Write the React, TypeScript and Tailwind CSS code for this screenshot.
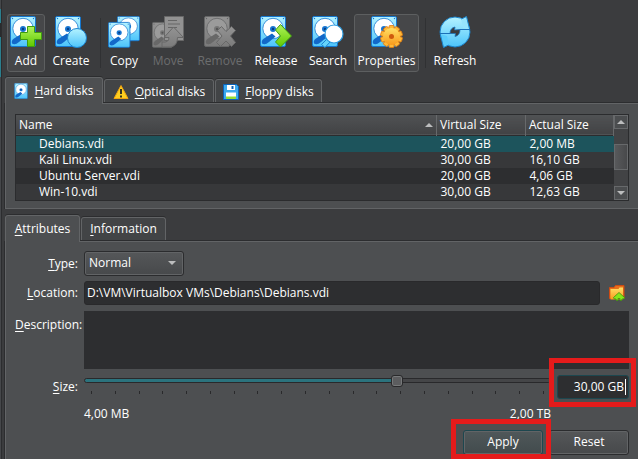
import { useState, type CSSProperties, type ReactNode } from "react";
import clsx from "clsx";

function Defs() {
  return (
    <svg width="0" height="0" className="absolute" aria-hidden="true">
      <defs>
        <linearGradient id="sky" x1="0" y1="0" x2="0" y2="1">
          <stop offset="0" stopColor="#b4f2ff" />
          <stop offset="1" stopColor="#4cc4fb" />
        </linearGradient>
        <linearGradient id="lime" x1="0" y1="0" x2="0" y2="1">
          <stop offset="0" stopColor="#b0f45a" />
          <stop offset="1" stopColor="#5fc800" />
        </linearGradient>
        <linearGradient id="amber" x1="0" y1="0" x2="0" y2="1">
          <stop offset="0" stopColor="#ffe066" />
          <stop offset="1" stopColor="#f99a1c" />
        </linearGradient>
        <linearGradient id="ash" x1="0" y1="0" x2="0" y2="1">
          <stop offset="0" stopColor="#939393" />
          <stop offset="1" stopColor="#7b7b7b" />
        </linearGradient>
      </defs>
    </svg>
  );
}

function Disk({ gray = false }: { gray?: boolean }) {
  const line = gray ? "#666768" : "#1577cf";
  return (
    <g>
      <rect x="0.5" y="0.5" width="25" height="30" rx="1.5" fill={gray ? "url(#ash)" : "url(#sky)"} stroke={line} />
      <circle cx="13" cy="12.5" r="10.2" fill={gray ? "#9b9b9b" : "#fff"} stroke={line} strokeWidth="0.8" />
      <path d="M12 17.500 15.500 20.500 9 26q-4 3.500-7 1.500-1-3 2-5Z" fill={gray ? "#686868" : "#1268c9"} />
      <circle cx="13" cy="13" r="3" fill={gray ? "#777" : "#1976d2"} />
      <circle cx="13" cy="13" r="1.2" fill={gray ? "#555" : "#083d86"} />
      <g fill={line}>
        <circle cx="2.5" cy="2.5" r="0.7" />
        <circle cx="23.5" cy="2.5" r="0.7" />
      </g>
    </g>
  );
}

function BigIcon({ children }: { children: ReactNode }) {
  return (
    <svg width="32" height="32" viewBox="0 0 32 32" className="shrink-0" aria-hidden="true">
      {children}
    </svg>
  );
}

const icons: Record<string, ReactNode> = {
  Add: (
    <>
      <Disk />
      <path d="M17.5 10.5h7v6h7v7h-7v7h-7v-7h-7v-7h7Z" fill="url(#lime)" stroke="#3f9c10" />
    </>
  ),
  Create: (
    <>
      <Disk />
      <circle cx="22" cy="22" r="9.5" fill="url(#sky)" stroke="#1c85d0" />
    </>
  ),
  Copy: (
    <>
      <g transform="translate(9 0) scale(.88 .81)">
        <Disk />
      </g>
      <g transform="translate(0 6) scale(.86 .83)">
        <Disk />
      </g>
    </>
  ),
  Move: (
    <>
      <g transform="translate(0 6) scale(.8 .83)">
        <Disk gray />
      </g>
      <path d="M12.5.5h19v24h-19Z" fill="#929292" stroke="#686868" />
      <path d="M16 4.5h9M16 8h12M16 11.500h9" stroke="#666" />
      <path d="m21.500 11 10 10.500h-6q0 8-6.500 9.500H10v-5q7 1 7-4.500h-5Z" fill="url(#ash)" stroke="#686868" />
    </>
  ),
  Remove: (
    <>
      <Disk gray />
      <path d="m13.500 14.500 4-4 4.500 5 5.500-5 4 4-5 5.500 5 6.500-4 4-5.500-5.500-5.500 5.500-4-4 5.500-6.500Z" fill="url(#ash)" stroke="#686868" />
    </>
  ),
  Release: (
    <>
      <Disk />
      <path d="m20.500 8.500 11 11.500-11 11-5-5 5-6-5-6Z" fill="url(#lime)" stroke="#3f9c10" />
    </>
  ),
  Search: (
    <>
      <Disk />
      <path d="m15 23 3 3-5 5.500-3.500-3Z" fill="#65d3fb" stroke="#1c85d0" />
      <circle cx="22" cy="18" r="9" fill="#fff" stroke="#2d9be0" strokeWidth="1.200" />
    </>
  ),
  Properties: (
    <>
      <Disk />
      <g transform="translate(20.500 20.500)">
        {[0, 36, 72, 108, 144].map((a) => (
          <rect key={a} x="-2.500" y="-11" width="5" height="22" rx="1" fill="#ffb938" stroke="#e07a10" strokeWidth="0.800" transform={`rotate(${a})`} />
        ))}
        <circle r="8.500" fill="url(#amber)" />
        <circle r="2.500" fill="#ce5a0e" />
      </g>
    </>
  ),
  Refresh: (
    <>
      <circle cx="16" cy="16" r="15" fill="url(#sky)" stroke="#1b83cb" />
      <path d="M22 3 27.500.5 30.800 14 24 12Z" fill="#97e4fd" />
      <path d="M22.500 3 27.500.5 30.800 14" fill="none" stroke="#1b83cb" />
      <path d="M10 29 4.500 31.500 1.200 18 8 20Z" fill="#5accfb" />
      <path d="M9.500 29 4.500 31.500 1.200 18" fill="none" stroke="#1b83cb" />
      <path d="M1 17.500h10M21 13.500h10" stroke="#1b70b8" />
      <path d="M11 17.500q0-5.500 5-6.500l-.5 3 5.500-.5q0 6-5 7l.5-3Z" fill="#3b3c3e" stroke="#1b70b8" strokeWidth=".8" />
    </>
  ),
};

function Tool({ name, width, state }: { name: string; width: string; state?: "boxed" | "disabled" }) {
  return (
    <button
      type="button"
      disabled={state === "disabled"}
      className={clsx(
        "flex h-[58px] shrink-0 flex-col items-center rounded-[3px] border pt-px",
        width,
        state === "boxed" ? "border-[#5d5f60] bg-[#464749]" : "border-transparent",
        state === "disabled" ? "text-[#6c6d6e]" : "text-white",
      )}
    >
      <BigIcon>{icons[name]}</BigIcon>
      <span className="mt-[5px] leading-4">{name}</span>
    </button>
  );
}

function Separator({ className }: { className: string }) {
  return <div className={clsx("my-1 w-px shrink-0 bg-[#303133]", className)} />;
}

function Mnemonic({ children }: { children: string }) {
  return <span className="underline decoration-white decoration-1 underline-offset-2">{children}</span>;
}

function Tab({ letter, rest, active, icon, width }: { letter: string; rest: string; active?: boolean; icon?: ReactNode; width: string }) {
  return (
    <button
      type="button"
      role="tab"
      aria-selected={!!active}
      className={clsx(
        "flex shrink-0 items-center justify-center gap-1.5 rounded-t-[3px] border border-b-0 border-[#626466] text-white shadow-[0_-1px_0_#2c2d2f]",
        width,
        active ? "z-10 -mb-px h-[27px] bg-[#4d4f51]" : "h-6 bg-[#424446]",
      )}
    >
      {icon}
      <span>
        <Mnemonic>{letter}</Mnemonic>
        {rest}
      </span>
    </button>
  );
}

const disks = [
  ["Debians.vdi", "20,00 GB", "2,00 MB"],
  ["Kali Linux.vdi", "30,00 GB", "16,10 GB"],
  ["Ubuntu Server.vdi", "20,00 GB", "4,06 GB"],
  ["Win-10.vdi", "30,00 GB", "12,63 GB"],
];

function Arrow({ down }: { down?: boolean }) {
  return (
    <svg width="8" height="4" viewBox="0 0 8 4" aria-hidden="true">
      <path d={down ? "M0 0h8L4 4Z" : "M0 4h8L4 0Z"} fill="#bcbdbe" />
    </svg>
  );
}

function DiskTable() {
  const head = "border-r border-[#67696b] px-[3px] py-0 text-left font-normal leading-4";
  return (
    <div className="flex border border-[#2b2c2e] bg-[#2d2e30]">
      <table className="flex-1 table-fixed border-collapse">
        <colgroup>
          <col />
          <col className="w-[89px]" />
          <col className="w-[88px]" />
        </colgroup>
        <thead>
          <tr className="h-5 border-b border-[#2b2c2e] bg-linear-to-b from-[#505254] to-[#424345]">
            <th className={head}>
              <span className="flex items-center justify-between">
                Name
                <Arrow />
              </span>
            </th>
            <th className={head}>Virtual Size</th>
            <th className={head}>Actual Size</th>
          </tr>
        </thead>
        <tbody>
          {disks.map(([name, virtual, actual], i) => (
            <tr key={name} className={clsx("h-4 leading-4", i === 0 ? "bg-[#1d545c]" : i % 2 ? "bg-[#37383a]" : "bg-[#2d2e30]")}>
              <td className="py-0 pl-[23px]">{name}</td>
              <td className="px-1 py-0">{virtual}</td>
              <td className="px-1 py-0">{actual}</td>
            </tr>
          ))}
        </tbody>
      </table>
      <div className="flex w-3.5 flex-col bg-[#424345]">
        <button type="button" aria-label="Scroll up" className="flex h-3.5 items-center justify-center border border-[#67696b] bg-[#4b4d4f]">
          <Arrow />
        </button>
        <div className="flex flex-1 flex-col justify-center">
          <div className="h-[26px] border border-[#67696b] bg-linear-to-r from-[#58595b] to-[#48494b]" />
        </div>
        <button type="button" aria-label="Scroll down" className="flex h-3.5 items-center justify-center border border-[#67696b] bg-[#4b4d4f]">
          <Arrow down />
        </button>
      </div>
    </div>
  );
}

const label = "text-right";
const field = "h-6 rounded-[3px] border bg-[#2d2e30] text-white outline-none";
const action = "h-[25px] w-20 rounded-[3px] border shadow-[inset_0_0_0_1px_#626466] text-white";

function Callout({ className }: { className: string }) {
  return <div className={clsx("pointer-events-none absolute z-10 border-[#e51b1b]", className)} />;
}

function Attributes() {
  const [size, setSize] = useState(676);
  const fill = { "--fill": `linear-gradient(90deg, #2b737d ${size / 10}%, #454648 ${size / 10}%)` } as CSSProperties;
  return (
    <form className="grid grid-cols-[63px_minmax(0,1fr)] gap-x-1.5 px-[9px] pt-[9px]" onSubmit={(e) => e.preventDefault()}>
      <label htmlFor="type" className={clsx(label, "leading-[25px]")}>
        <Mnemonic>T</Mnemonic>ype:
      </label>
      <div className="relative w-[100px]">
        <select id="type" className="block h-[25px] w-full appearance-none rounded-[3px] border border-[#2b2c2e] bg-linear-to-b from-[#555759] to-[#47494b] px-1 text-white shadow-[inset_0_0_0_1px_#626466]">
          <option>Normal</option>
        </select>
        <span className="pointer-events-none absolute top-[10px] right-2 flex">
          <Arrow down />
        </span>
      </div>

      <label htmlFor="location" className={clsx(label, "mt-[5px] leading-6")}>
        <Mnemonic>L</Mnemonic>ocation:
      </label>
      <div className="mt-[5px] flex items-center">
        <input id="location" readOnly value="D:\VM\Virtualbox VMs\Debians\Debians.vdi" className={clsx(field, "min-w-0 flex-1 border-[#29292b] px-0.5")} />
        <button type="button" aria-label="Choose location" className="mr-1 ml-[9px]">
          <svg width="16" height="16" viewBox="0 0 16 16" aria-hidden="true">
            <path d="M.5 2.500H5L6.500.5h8.500v13H.5Z" fill="#e8701b" stroke="#cf4c13" />
            <path d="M1.500 4h8l1-1.500h3.500V14.500h-12.500Z" fill="url(#amber)" />
            <path d="m10 7.500 5.500 5q0 2-2.500 1.500l-.5 1.500h-1.500v-2h-2v2H7.500L7 14q-2.500.5-2.500-1.500Z" fill="#86e619" stroke="#3f8e10" strokeWidth=".8" />
          </svg>
        </button>
      </div>

      <label htmlFor="description" className={clsx(label, "mt-1.5 leading-7")}>
        <Mnemonic>D</Mnemonic>escription:
      </label>
      <textarea id="description" className="mt-1.5 block h-[58px] w-full resize-none bg-[#2d2e30] outline-none" />

      <label htmlFor="size" className={clsx(label, "mt-1.5 leading-6")}>
        <Mnemonic>S</Mnemonic>ize:
      </label>
      <div className="mt-1.5 flex gap-1.5">
        <div className="min-w-0 flex-1">
          <input
            id="size"
            type="range"
            max={1000}
            value={size}
            onChange={(e) => setSize(Number(e.target.value))}
            className="block h-3 w-full appearance-none bg-transparent [&::-webkit-slider-runnable-track]:h-[5px] [&::-webkit-slider-runnable-track]:rounded-sm [&::-webkit-slider-runnable-track]:border [&::-webkit-slider-runnable-track]:border-[#29292b] [&::-webkit-slider-runnable-track]:bg-[image:var(--fill)] [&::-webkit-slider-thumb]:-mt-1 [&::-webkit-slider-thumb]:size-3 [&::-webkit-slider-thumb]:appearance-none [&::-webkit-slider-thumb]:rounded-[3px] [&::-webkit-slider-thumb]:border [&::-webkit-slider-thumb]:border-[#29292b] [&::-webkit-slider-thumb]:bg-[#5c5d5f] [&::-webkit-slider-thumb]:shadow-[inset_0_0_0_1px_#77797a]"
            style={fill}
          />
          <div className="mt-1 flex justify-between px-[7px]">
            {Array.from({ length: 20 }, (_, i) => (
              <span key={i} className="h-[3px] w-px bg-[#29292b]" />
            ))}
          </div>
          <div className="mt-3 flex justify-between leading-4">
            <span>4,00 MB</span>
            <span>2,00 TB</span>
          </div>
        </div>
        <div className="relative w-[72px]">
          <input aria-label="Size value" defaultValue="30,00 GB" className={clsx(field, "w-full border-[#1d474f] pr-1 text-right")} />
          <span className="absolute top-1 right-[3px] h-4 w-px bg-white" />
          <Callout className="-top-[17px] -right-[7px] h-[49px] w-[87px] border-5" />
        </div>
      </div>

      <div className="col-span-2 mt-2 flex justify-end gap-1.5">
        <div className="relative">
          <button type="submit" className={clsx(action, "block border-[#1d474f] bg-linear-to-b from-[#50585a] to-[#424b4d]")}>
            Apply
          </button>
          <Callout className="-top-[11px] -right-2 h-10 w-[100px] border-5" />
        </div>
        <button type="reset" className={clsx(action, "border-[#2b2c2e] bg-linear-to-b from-[#555759] to-[#47494b]")}>
          Reset
        </button>
      </div>
    </form>
  );
}

const pane = "border-t border-l border-[#626466] bg-[#4d4f51] shadow-[0_-1px_0_#2c2d2f,-1px_0_0_#2c2d2f]";

export default function App() {
  return (
    <div className="flex min-h-screen overflow-hidden bg-[#3b3c3e] text-xs text-white [font-family:'Open_Sans',sans-serif]">
      <Defs />
      <div className="flex w-[5px] shrink-0">
        <div className="w-px bg-[#45474a] pt-[9px]">
          <div className="h-3.5 bg-[#2b7f8e]" />
          <div className="h-3.5 bg-[#2a2b2d]" />
          <div className="h-10 bg-[#2b7f8e]" />
        </div>
        <div className="w-px bg-[#2c2d2f]" />
      </div>
      <main className="flex min-w-0 flex-1 flex-col">
        <div className="flex pt-3.5 pl-0.5" role="toolbar">
          <Tool name="Add" width="w-[38px]" state="boxed" />
          <Tool name="Create" width="w-[52px]" />
          <Separator className="mx-[3px]" />
          <Tool name="Copy" width="w-10" />
          <Tool name="Move" width="w-12" state="disabled" />
          <Tool name="Remove" width="w-14" state="disabled" />
          <Tool name="Release" width="w-14" />
          <Tool name="Search" width="w-12" />
          <div className="flex pl-0.5">
            <Tool name="Properties" width="w-[65px]" state="boxed" />
          </div>
          <Separator className="mx-[6px]" />
          <Tool name="Refresh" width="w-[46px]" />
        </div>

        <div className="mt-[5px] flex items-end gap-px" role="tablist">
          <Tab
            letter="H"
            rest="ard disks"
            active
            width="w-[98px]"
            icon={
              <svg width="14" height="16" viewBox="0 0 26 31" aria-hidden="true">
                <Disk />
              </svg>
            }
          />
          <Tab
            letter="O"
            rest="ptical disks"
            width="w-[110px]"
            icon={
              <svg width="16" height="16" viewBox="0 0 16 16" aria-hidden="true">
                <path d="M8 1.500 15 14.500H1Z" fill="#ffcf1f" stroke="#f0a311" strokeLinejoin="round" />
                <path d="M8 5v5M8 11.500v2" stroke="#222" strokeWidth="1.800" />
              </svg>
            }
          />
          <Tab
            letter="F"
            rest="loppy disks"
            width="w-[107px]"
            icon={
              <svg width="16" height="16" viewBox="0 0 16 16" aria-hidden="true">
                <path d="M.5.5h13l2 2v13H.5Z" fill="#3ba9ee" stroke="#0c62b8" />
                <path d="M4 1h8v5H4Z" fill="#fff" />
                <path d="M8.500 2h2v3h-2Z" fill="#0c62b8" />
                <path d="M3 8.500h10V15H3Z" fill="#fff" />
                <path d="M3 12.500h10V15H3Z" fill="#94de35" />
              </svg>
            }
          />
        </div>
        <section className={clsx(pane, "border-b px-[9px] pt-2.5 pb-[7px]")}>
          <DiskTable />
        </section>

        <div className="mt-1.5 flex items-end gap-px" role="tablist">
          <Tab letter="A" rest="ttributes" active width="w-[75px]" />
          <Tab letter="I" rest="nformation" width="w-[85px]" />
        </div>
        <section className={clsx(pane, "flex-1 pb-1")}>
          <Attributes />
        </section>
      </main>
    </div>
  );
}
